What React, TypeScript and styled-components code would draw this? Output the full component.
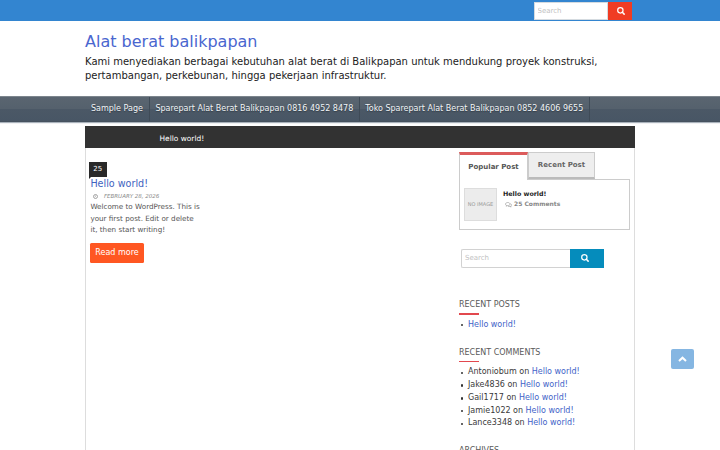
import React from 'react';
import styled, { createGlobalStyle } from 'styled-components';

const Global = createGlobalStyle`
  *, *::before, *::after { box-sizing: border-box; }
  body {
    margin: 0;
    background: #fff;
    color: #3a3a3a;
    font: 8px/12.8px "DejaVu Sans", sans-serif;
  }
  h1, h2, h3, p, ul { margin: 0; padding: 0; font-weight: normal; }
  a { color: #4163c8; text-decoration: none; }
`;

const Page = styled.div`
  width: 100%;
  height: 450px;
  overflow: hidden;
`;
const TopBar = styled.div`
  height: 20.5px;
  background: #3385d0;
`;
const Container = styled.div`
  width: 550px;
  margin: 0 auto;
`;
const TopSearch = styled.form`
  display: flex;
  width: 98.5px;
  margin-left: 448.5px;
  padding-top: 2px;
`;
const Field = styled.input<{ $outlined?: boolean }>`
  flex: 1;
  min-width: 0;
  height: ${p => (p.$outlined ? '19px' : '18px')};
  padding: 0 3px;
  border: 1px solid ${p => (p.$outlined ? '#d2d2d2' : '#d5dbe0')};
  ${p => p.$outlined && 'border-radius: 2px 0 0 2px; border-right: 0;'}
  background: #fff;
  font: 7px "DejaVu Sans", sans-serif;
  outline: 0;
  &::placeholder { color: #c2c2c2; opacity: 1; }
`;
const SearchButton = styled.button<{ $tone: string; $w: number }>`
  display: flex;
  align-items: center;
  justify-content: center;
  width: ${p => p.$w}px;
  padding: ${p => (p.$w > 30 ? '0 3px 0 0' : '0 0 0 2px')};
  border: 0;
  background: ${p => p.$tone};
  color: #fff;
`;
const Header = styled.header`
  padding: 10.5px 0 0;
  height: 75.5px;
`;
const SiteTitle = styled.h1`
  color: #4a66cf;
  font-size: 16px;
  line-height: 22px;
`;
const Tagline = styled.p`
  margin-top: 1.5px;
  color: #222;
  font-size: 10px;
  line-height: 14px;
`;
const Nav = styled.nav`
  height: 26px;
  border-top: 1px solid #7c858d;
  border-bottom: 1px solid #46525f;
  background: linear-gradient(#5a6570 0, #55616d 48%, #4b5866 52%, #485665 100%);
  box-shadow: 0 1px 1px #a9b2bb;
`;
const Menu = styled(Container)`
  display: flex;
  height: 100%;
`;
const MenuItem = styled.a`
  display: flex;
  align-items: center;
  padding: 0 5.5px;
  border-right: 1px solid #3f4b57;
  color: #f1f4f6;
  text-shadow: 0 1px 1px #333d47;
  white-space: nowrap;
  &:first-child { padding: 0 6px; }
`;
const Main = styled(Container)`
  height: 340px;
  margin-top: 4px;
  border: solid #ddd;
  border-width: 0 1px;
`;
const Ticker = styled.div`
  height: 21.5px;
  margin: 0 -1px;
  padding: 7px 0 0 74.5px;
  background: #323232;
  color: #fff;
  font-size: 7.45px;
`;
const Columns = styled.div`
  display: flex;
  justify-content: space-between;
`;
const Post = styled.article`
  width: 120px;
  padding: 14.5px 0 0 4.4px;
`;
const DayBadge = styled.div`
  position: relative;
  width: 18.5px;
  height: 15px;
  margin-left: -1.9px;
  background: #292929;
  color: #fff;
  font-size: 7px;
  line-height: 15px;
  text-align: center;
  &::after {
    content: '';
    position: absolute;
    left: 0;
    top: 100%;
    border-top: 2px solid #292929;
    border-right: 2px solid transparent;
  }
`;
const PostTitle = styled.h2`
  color: #4163c0;
  font-size: 9.6px;
  line-height: 13px;
`;
const Meta = styled.div`
  display: flex;
  align-items: center;
  gap: 5.5px;
  height: 10px;
  margin-top: 1px;
  padding-left: 3px;
  color: #888;
  font-size: 5.5px;
  font-style: italic;
`;
const Excerpt = styled.p`
  color: #555;
  font-size: 7.2px;
  line-height: 11.5px;
  white-space: nowrap;
`;
const ReadMore = styled.a`
  display: block;
  width: 54px;
  margin: 7px 0 0 -0.4px;
  border-radius: 1.5px;
  background: #ff5722;
  color: #fff;
  line-height: 20px;
  text-align: center;
`;
const Sidebar = styled.aside`
  width: 175px;
  padding-top: 4.5px;
`;
const Tabs = styled.div`
  display: flex;
  height: 27px;
  font-size: 7px;
  font-weight: bold;
  color: #555;
  text-align: center;
`;
const Tab = styled.div<{ $active?: boolean }>`
  width: ${p => (p.$active ? 69 : 67)}px;
  height: ${p => (p.$active ? 28 : 27)}px;
  position: relative;
  z-index: ${p => (p.$active ? 1 : 0)};
  line-height: ${p => (p.$active ? 25 : 24)}px;
  border: 1px solid #ccc;
  ${p => p.$active
    ? 'border-top: 3px solid #dc5b5b; border-bottom: 0; background: #fff;'
    : 'border-bottom: 2px solid #bbb; background: #eee; color: #666;'}
`;
const TabPanel = styled.div`
  display: flex;
  gap: 6px;
  width: 171px;
  height: 51px;
  padding: 8px 4px;
  border: 1px solid #ccc;
`;
const Thumb = styled.div`
  width: 33px;
  height: 33px;
  border: 1px solid #ddd;
  background: #ececec;
  color: #999;
  font-size: 5px;
  line-height: 31px;
  text-align: center;
  white-space: nowrap;
`;
const PopularTitle = styled.div`
  padding-top: 0.5px;
  color: #222;
  font-size: 6.35px;
  font-weight: bold;
  line-height: 10px;
`;
const CommentCount = styled.div`
  display: flex;
  align-items: center;
  gap: 2px;
  height: 12.5px;
  padding-left: 2px;
  color: #888;
  font-size: 6px;
  font-weight: bold;
`;
const SideSearch = styled.form`
  display: flex;
  width: 142.5px;
  margin: 18.5px 0 30.5px 2px;
`;
const Widget = styled.section`
  margin-bottom: 14.5px;
`;
const WidgetTitle = styled.h3`
  width: max-content;
  height: 16.5px;
  padding-top: 0.8px;
  color: #5a5a5a;
  font-size: 8px;
  &::after {
    content: '';
    display: block;
    width: 20px;
    height: 1.5px;
    margin-top: 1.5px;
    background: #e2484e;
  }
`;
const List = styled.ul`
  margin-top: 4.1px;
  padding-left: 9px;
  line-height: 12.75px;
`;
const Entry = styled.li`
  list-style: none;
  display: flex;
  gap: 2.5px;
  &::before {
    content: '';
    width: 2.5px;
    height: 2.5px;
    margin: 5.3px 2.5px 0 -7.5px;
    border-radius: 50%;
    background: #333;
  }
`;
const ToTop = styled.button`
  position: fixed;
  left: 671px;
  top: 349px;
  display: flex;
  align-items: center;
  justify-content: center;
  width: 22.5px;
  height: 20px;
  padding: 0;
  border: 0;
  border-radius: 2px;
  background: #85b6e2;
  color: #fff;
`;

const SearchIcon = () => (
  <svg width="8" height="8" viewBox="0 0 15 15" fill="none" stroke="currentColor">
    <circle cx="6.3" cy="6.3" r="5" strokeWidth="2.3" />
    <path d="M10 10L13.4 13.4" strokeWidth="2.8" strokeLinecap="round" />
  </svg>
);
const ClockIcon = () => (
  <svg width="5" height="5" viewBox="0 0 10 10" fill="none" stroke="currentColor">
    <circle cx="5" cy="5" r="4" strokeWidth="1.5" />
    <path d="M5 2.8V5.4H3.5" />
  </svg>
);
const CommentsIcon = () => (
  <svg width="7" height="6" viewBox="0 0 14 12" fill="none" stroke="currentColor" strokeWidth="1.1">
    <path d="M5.5 1C3 1 1 2.4 1 4.2c0 1.1.7 2 1.8 2.6L2.2 8.4 4.5 7.3c3.3.3 5.5-1.2 5.5-3.1S8 1 5.5 1z" />
    <path d="M11 3.6c1.3.5 2 1.3 2 2.3 0 1-.6 1.8-1.5 2.4l.8 1.7-2.5-1.1C8 9.2 6.6 8.9 5.8 8.3" />
  </svg>
);
const ChevronUp = () => (
  <svg width="9" height="6" viewBox="0 0 9 6" fill="none" stroke="currentColor" strokeWidth="2">
    <path d="M1 5L4.5 1.7L8 5" />
  </svg>
);

const MENU = [
  'Sample Page',
  'Sparepart Alat Berat Balikpapan 0816 4952 8478',
  'Toko Sparepart Alat Berat Balikpapan 0852 4606 9655',
];
const COMMENTERS = ['Antoniobum', 'Jake4836', 'Gail1717', 'Jamie1022', 'Lance3348'];

export default function App() {
  return (
    <Page>
      <Global />
      <TopBar>
        <Container>
          <TopSearch>
            <Field placeholder="Search" />
            <SearchButton type="button" aria-label="Search" $tone="#f03c23" $w={24.5}><SearchIcon /></SearchButton>
          </TopSearch>
        </Container>
      </TopBar>
      <Container>
        <Header>
          <SiteTitle>Alat berat balikpapan</SiteTitle>
          <Tagline>
            Kami menyediakan berbagai kebutuhan alat berat di Balikpapan untuk mendukung proyek konstruksi,
            pertambangan, perkebunan, hingga pekerjaan infrastruktur.
          </Tagline>
        </Header>
      </Container>
      <Nav>
        <Menu>{MENU.map(label => <MenuItem key={label}>{label}</MenuItem>)}</Menu>
      </Nav>
      <Main>
        <Ticker>Hello world!</Ticker>
        <Columns>
          <Post>
            <DayBadge>25</DayBadge>
            <PostTitle>Hello world!</PostTitle>
            <Meta><ClockIcon />FEBRUARY 28, 2026</Meta>
            <Excerpt>
              Welcome to WordPress. This is<br />your first post. Edit or delete<br />it, then start writing!
            </Excerpt>
            <ReadMore>Read more</ReadMore>
          </Post>
          <Sidebar>
            <Tabs>
              <Tab $active>Popular Post</Tab>
              <Tab>Recent Post</Tab>
            </Tabs>
            <TabPanel>
              <Thumb>NO IMAGE</Thumb>
              <div>
                <PopularTitle>Hello world!</PopularTitle>
                <CommentCount><CommentsIcon />25 Comments</CommentCount>
              </div>
            </TabPanel>
            <SideSearch>
              <Field $outlined placeholder="Search" />
              <SearchButton type="button" aria-label="Search" $tone="#058cbc" $w={33.5}><SearchIcon /></SearchButton>
            </SideSearch>
            <Widget>
              <WidgetTitle>RECENT POSTS</WidgetTitle>
              <List><Entry><a>Hello world!</a></Entry></List>
            </Widget>
            <Widget>
              <WidgetTitle>RECENT COMMENTS</WidgetTitle>
              <List>
                {COMMENTERS.map(name => (
                  <Entry key={name}><span>{name} on</span><a>Hello world!</a></Entry>
                ))}
              </List>
            </Widget>
            <Widget><WidgetTitle>ARCHIVES</WidgetTitle></Widget>
          </Sidebar>
        </Columns>
      </Main>
      <ToTop aria-label="Back to top"><ChevronUp /></ToTop>
    </Page>
  );
}
